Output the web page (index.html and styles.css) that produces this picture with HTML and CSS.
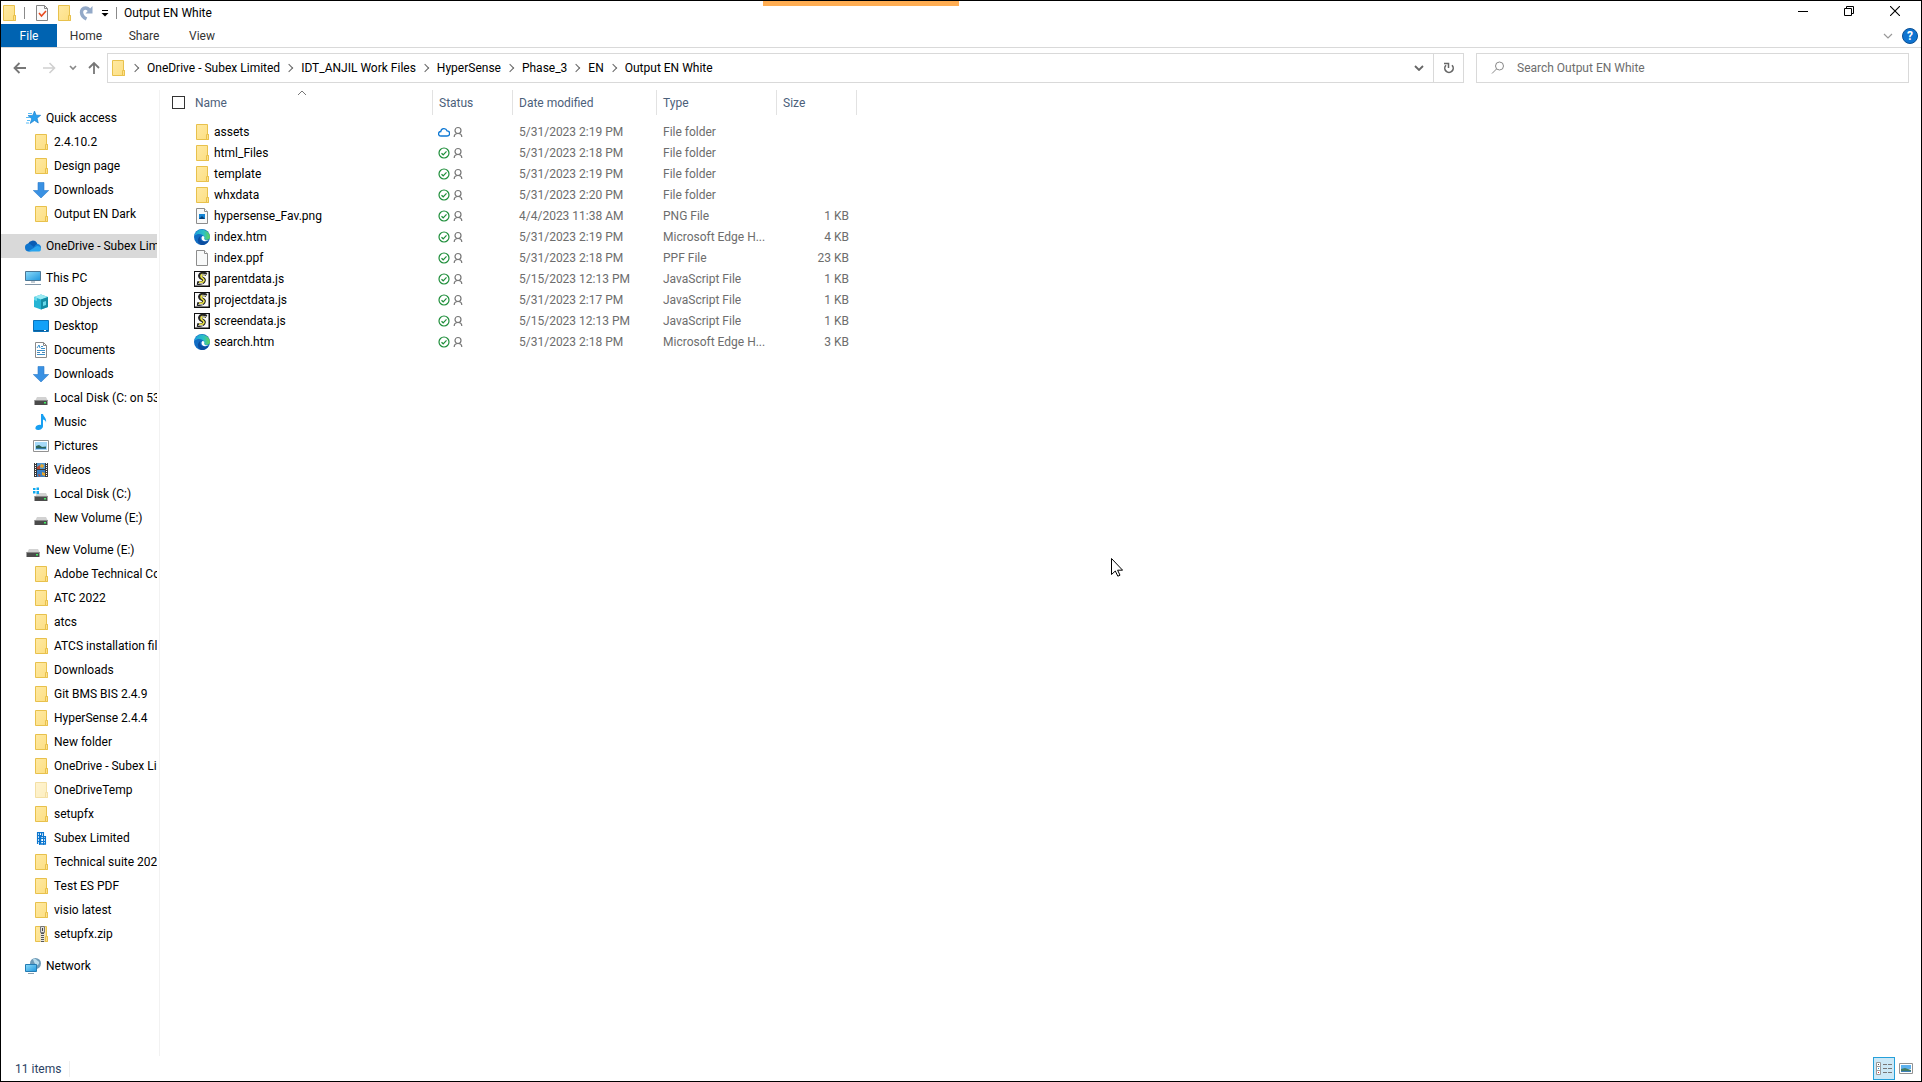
FILE: index.html
```html
<!DOCTYPE html>
<html lang="en">
<head>
<meta charset="utf-8">
<title>Output EN White</title>
<link rel="stylesheet" href="styles.css">
</head>
<body>
<svg class="defs" aria-hidden="true">
  <defs>
    <linearGradient id="gFolder" x1="0" y1="0" x2="1" y2="1"><stop offset="0" stop-color="#ffe9a2"/><stop offset="1" stop-color="#fcdf83"/></linearGradient>
    <linearGradient id="gScreen" x1="0" y1="0" x2="1" y2="1"><stop offset="0" stop-color="#8ddcfb"/><stop offset="1" stop-color="#1f96dd"/></linearGradient>
    <linearGradient id="gEdge" x1="0" y1="0" x2="1" y2="0"><stop offset="0" stop-color="#1c9fdc"/><stop offset=".6" stop-color="#2cc0c4"/><stop offset="1" stop-color="#63d550"/></linearGradient>
  </defs>
  <symbol id="folder" viewBox="0 0 16 16"><path d="M2.500.500h11v10h1v5h-12z" fill="url(#gFolder)" stroke="#e8c14c"/><path d="M12.500 15.500v-5h2v5z" fill="#ffe08a" stroke="#e8c14c"/></symbol>
  <symbol id="zip" viewBox="0 0 16 16"><use href="#folder"/><path d="M9.500 0v16" stroke="#e3e3e3" stroke-width="4"/><path d="M9.500 7v9" stroke="#555" stroke-width="3" stroke-dasharray="1 1"/><path d="M7.500.500h4v6h-4z" fill="#ddd" stroke="#777"/><path d="M9 2h1v3H9z" fill="#444"/></symbol>
  <symbol id="star" viewBox="0 0 16 16"><path d="M9.500 1l1.700 4.200 4.500.100-3.600 2.900 1.200 4.800-3.800-2.500-4.300 3 1.500-4.800L3 5.600l4.700-.2z" fill="#2aa0ee" stroke="#1478c8" stroke-width=".6"/><path d="M3 3.500h4M1 7.500h4M2 10.500h3M1 13h3" stroke="#5bbcf5"/></symbol>
  <symbol id="download" viewBox="0 0 16 16"><path d="M5 .5h6v8h4.700L8 16 .300 8.500H5z" fill="#3991e3" stroke="#2c7bc9" stroke-width=".6"/></symbol>
  <symbol id="onedrive" viewBox="0 0 16 16"><path d="M3 6a5 5 0 0 1 9-1l1 3-9 4z" fill="#0a5cb4"/><path d="M0 9.500A3.500 3.500 0 0 1 5 6l8 6-9 1.500A4 4 0 0 1 0 9.500" fill="#1075cd"/><path d="M11 6.500a3.300 3.300 0 0 1 4.500 4.500L9 9z" fill="#1583d8"/><path d="M3 13.500L12 8c2 0 4 1 4 3s-1 2.500-3 2.500z" fill="#2aa5ee"/></symbol>
  <symbol id="pc" viewBox="0 0 16 16"><path d="M.500 1.500h15v9H.500z" fill="url(#gScreen)" stroke="#4c7795"/><path d="M6 11h4v2H6z" fill="#c4ccd4"/><path d="M0 14.500h16" stroke="#8196a8"/></symbol>
  <symbol id="cube" viewBox="0 0 16 16"><path d="M8 .5l7 2.500v10l-7 2.500L1 13V3z" fill="#25b4d4"/><path d="M8 .5L15 3 8 5.500 1 3z" fill="#9beaf2"/><path d="M8 5.500L15 3v10l-7 2.500z" fill="#128ca5"/><path d="M1 3l3 1v3l-3-1zM10 8l3-1v4l-3 1z" fill="#67d8e9"/></symbol>
  <symbol id="desktop" viewBox="0 0 16 16"><path d="M.500 2.500h15v11H.500z" fill="#12a1f8" stroke="#0a72b9"/><path d="M1 12.500h14" stroke="#0b5d9a"/><path d="M11 12.500h2" stroke="#fff"/></symbol>
  <symbol id="document" viewBox="0 0 16 16"><path d="M2.500.500h8l3 3v12h-11z" fill="#fff" stroke="#8a8a8a"/><path d="M10.500.500v3h3" fill="none" stroke="#8a8a8a"/><path d="M4 6l2-3 1 3M8 4.500h2M8 6.500h4M4 8.500h8M4 12.500h8" fill="none" stroke="#3b90cc"/><path d="M4 10.500h3M9 10.500h3" stroke="#5187ad"/></symbol>
  <symbol id="disk" viewBox="0 0 16 16"><path d="M4 7h9l2 4H2z" fill="#d2d2d2"/><path d="M1.500 10h13v5h-13z" fill="#4b4b4b"/><path d="M2 10.500h12" stroke="#898989"/><path d="M11 12h2v1.500h-2z" fill="#43ef64"/></symbol>
  <symbol id="windisk" viewBox="0 0 16 16"><use href="#disk"/><path d="M0 2h2.500v2H0zM3.500 1.500H6V4H3.500zM0 5h2.500v2.500H0zM3.500 5H6v3H3.500z" fill="#12a9ef"/></symbol>
  <symbol id="music" viewBox="0 0 16 16"><path d="M8 0h2c.500 3 4 4 3 9 0-2-1-3-3-3.500V12c0 2.500-2.500 4-5 4-2 0-3-1-2.500-2.500C3 11.500 5.500 10.500 8 11z" fill="#18a0f2"/></symbol>
  <symbol id="picture" viewBox="0 0 16 16"><path d="M.500 2.500h15v11H.500z" fill="#fff" stroke="#929292"/><path d="M2 4h12v8H2z" fill="#a5d9f8"/><path d="M3 8l3-1 3 2 4-.5V11H3z" fill="#2c6558"/><path d="M3 10h10v1H3z" fill="#3476a6"/></symbol>
  <symbol id="video" viewBox="0 0 16 16"><path d="M1 1h14v14H1z" fill="#3a3a3a"/><path d="M2.500 1v14M13.500 1v14" stroke="#fff" stroke-dasharray="1 1"/><path d="M4 1h8v6H4z" fill="#5396ce"/><path d="M4 8h8v7H4z" fill="#397fc3"/><path d="M8 2l3 1-1 3-3-1zM9 10l3 1v3l-3-1z" fill="#e7a72d"/><path d="M4 5l3-2v4H4zM5 12l3 1-2 2z" fill="#b94a36"/></symbol>
  <symbol id="building" viewBox="0 0 16 16"><path d="M4.600 14V2.600h5.800V6M7.600 14V6.600h4.800V14z" fill="none" stroke="#0b76cf" stroke-width="1.300"/><path d="M6.500 3v12M8.500 3v4M10.500 7v8" stroke="#0b76cf"/><path d="M4 5.500h4M4 8.500h9M4 11.500h9" stroke="#0b76cf"/></symbol>
  <symbol id="network" viewBox="0 0 16 16"><circle cx="10.500" cy="5.500" r="5.500" fill="#6f9bb8"/><path d="M8 1c3-1 3 1 5 2s1 3 0 4-3-1-4-3z" fill="#b9dcec"/><path d="M.500 6.500h11v7H.500z" fill="url(#gScreen)" stroke="#237bb3"/><path d="M3 15.500h6" stroke="#8aa0b0"/></symbol>
  <symbol id="file" viewBox="0 0 16 16"><path d="M2.500.500h8l3 3v12h-11z" fill="#f8f9f9" stroke="#8c8c8c"/><path d="M10.500.500v3h3" fill="#fff" stroke="#8c8c8c"/></symbol>
  <symbol id="png" viewBox="0 0 16 16"><use href="#file"/><path d="M5 6h6v5H5z" fill="#1685d4"/><path d="M5 11l3-3 3 3z" fill="#073d75"/></symbol>
  <symbol id="edge" viewBox="0 0 16 16"><circle cx="8" cy="8" r="8" fill="#116cc3"/><path d="M.300 6.500A8 8 0 0 1 16 8c0 3-4 3.500-6 2.500 0-1 .500-1 .200-2.500C9 4.500 4 4 .300 6.500" fill="url(#gEdge)"/><path d="M6.500 7c-2 5 3 7 8.500 4.500-2 3.500-5 5-8 4.500-4-2-4-7-.5-9" fill="#0b4da0"/><path d="M10 7.500c1 1.500-.5 2 .500 3s3 1 4.500.500C12 13 7 12.500 7.500 8.500 8 7 9 6.500 10 7.500" fill="#fff"/></symbol>
  <symbol id="script" viewBox="0 0 16 16"><path d="M0 0h16v16H0z" fill="#111"/><path d="M1 1h13.500v13.500H1z" fill="#fbfbfb"/><path d="M12.500 3.500C9 1.500 5 3 6 5.500s4.500 1.500 4 4-3 3-7 2.500" fill="none" stroke="#222" stroke-width="3.600"/><path d="M11 4C9 3 6.500 3.500 7 5.500s3.500 2 3 4-3 2-5 1.500" fill="none" stroke="#f0e84c" stroke-width="1.600"/><path d="M8 3.500h4M4 12.500h5" stroke="#aaa"/></symbol>
  <symbol id="synced" viewBox="0 0 12 12"><circle cx="6" cy="6" r="5" fill="none" stroke="#1e8e3a" stroke-width="1.200"/><path d="M3.500 6.200l1.700 1.600 3.300-3.400" fill="none" stroke="#1e8e3a" stroke-width="1.200"/></symbol>
  <symbol id="cloud" viewBox="0 0 12 12"><path d="M2.800 10a2.200 2.200 0 0 1 0-4.500A3.200 3.200 0 0 1 9 4.800a2.600 2.600 0 0 1 0 5.200z" fill="none" stroke="#0f78d4" stroke-width="1.300"/></symbol>
  <symbol id="person" viewBox="0 0 10 12"><circle cx="5" cy="4.500" r="3" fill="none" stroke="#777" stroke-width="1.200"/><path d="M1.200 11c0-2 1.500-3.500 3.800-3.500S8.800 9 8.800 11" fill="none" stroke="#777" stroke-width="1.200"/></symbol>
</svg>

<div class="window">
  <header class="titlebar">
    <svg class="icon"><use href="#folder"/></svg>
    <span class="bar"></span>
    <button class="quick" aria-label="Properties"><svg class="icon" viewBox="0 0 16 16"><path d="M2.500.500h8l3 3v12h-11z" fill="#fafafa" stroke="#858585"/><path d="M10.500.500v3h3" fill="none" stroke="#858585"/><path d="M5 8l2.500 3L12 6" fill="none" stroke="#e8491d" stroke-width="1.600"/></svg></button>
    <button class="quick" aria-label="New folder"><svg class="icon"><use href="#folder"/></svg></button>
    <button class="quick" aria-label="Redo"><svg class="icon" viewBox="0 0 16 16"><path d="M8.500 14C2 11 2 3 7.500 3c2 0 3 1 4 2.500" fill="none" stroke="#93a9c8" stroke-width="3.400"/><path d="M14.500 1v7.500h-7z" fill="#93a9c8"/></svg></button>
    <button class="quick more" aria-label="Customize toolbar"><svg width="8" height="8" viewBox="0 0 8 8"><path d="M1 1.500h6" stroke="#000"/><path d="M.500 4h7L4 7.500z"/></svg></button>
    <span class="bar"></span>
    <h1 class="title">Output EN White</h1>
    <div class="controls">
      <button aria-label="Minimize"><svg width="10" height="10" viewBox="0 0 10 10"><path d="M0 5.500h10" stroke="#000"/></svg></button>
      <button aria-label="Restore"><svg width="10" height="10" viewBox="0 0 10 10"><path d="M.500 2.500h7v7h-7zM2.500 2.500v-2h7v7h-2" fill="none" stroke="#000"/></svg></button>
      <button aria-label="Close"><svg width="10" height="10" viewBox="0 0 10 10"><path d="M0 0l10 10M10 0L0 10" stroke="#000" stroke-width="1.100"/></svg></button>
    </div>
    <div class="share-strip"></div>
  </header>

  <nav class="ribbon" aria-label="Ribbon">
    <button class="tab file">File</button>
    <button class="tab">Home</button>
    <button class="tab">Share</button>
    <button class="tab">View</button>
    <button class="expand" aria-label="Expand ribbon"><svg width="10" height="6" viewBox="0 0 10 6"><path d="M1 1l4 4 4-4" fill="none" stroke="#999" stroke-width="1.200"/></svg></button>
    <button class="help" aria-label="Help">?</button>
  </nav>

  <div class="location">
    <div class="history">
      <button aria-label="Back"><svg width="14" height="12" viewBox="0 0 14 12"><path d="M13 6H2M6.500 1l-5 5 5 5" fill="none" stroke="#777" stroke-width="1.800"/></svg></button>
      <button aria-label="Forward"><svg width="14" height="12" viewBox="0 0 14 12"><path d="M1 6h11M7.500 1l5 5-5 5" fill="none" stroke="#d0d0d0" stroke-width="1.600"/></svg></button>
      <button class="recent" aria-label="Recent locations"><svg width="8" height="6" viewBox="0 0 8 6"><path d="M1 1l3 3 3-3" fill="none" stroke="#888" stroke-width="1.600"/></svg></button>
      <button aria-label="Up"><svg width="12" height="14" viewBox="0 0 12 14"><path d="M6 13V2M1 7l5-5 5 5" fill="none" stroke="#777" stroke-width="1.800"/></svg></button>
    </div>
    <div class="address">
      <svg class="icon"><use href="#folder"/></svg>
      <ol class="crumbs">
        <li><a href="#">OneDrive - Subex Limited</a></li>
        <li><a href="#">IDT_ANJIL Work Files</a></li>
        <li><a href="#">HyperSense</a></li>
        <li><a href="#">Phase_3</a></li>
        <li><a href="#">EN</a></li>
        <li><a href="#">Output EN White</a></li>
      </ol>
      <button class="drop" aria-label="Previous locations"><svg width="10" height="6" viewBox="0 0 10 6"><path d="M1 1l4 4 4-4" fill="none" stroke="#666" stroke-width="1.800"/></svg></button>
      <button class="refresh" aria-label="Refresh"><svg width="12" height="12" viewBox="0 0 12 12"><path d="M9 3.200a4.200 4.200 0 1 1-6 0" fill="none" stroke="#666" stroke-width="1.600"/><path d="M1 1.500h4.500V6" fill="none" stroke="#666" stroke-width="1.500"/></svg></button>
    </div>
    <label class="search">
      <svg width="14" height="14" viewBox="0 0 14 14"><circle cx="8.500" cy="5" r="4" fill="none" stroke="#888"/><path d="M5.500 8L1 12.500" stroke="#888"/></svg>
      <input type="text" placeholder="Search Output EN White" aria-label="Search Output EN White">
    </label>
  </div>

  <div class="body">
    <nav class="tree" aria-label="Folders">
      <ul>
        <li><a class="root" href="#"><svg class="icon"><use href="#star"/></svg>Quick access</a></li>
        <li><a href="#"><svg class="icon"><use href="#folder"/></svg>2.4.10.2</a></li>
        <li><a href="#"><svg class="icon"><use href="#folder"/></svg>Design page</a></li>
        <li><a href="#"><svg class="icon"><use href="#download"/></svg>Downloads</a></li>
        <li><a href="#"><svg class="icon"><use href="#folder"/></svg>Output EN Dark</a></li>
      </ul>
      <ul>
        <li><a class="root selected" href="#"><svg class="icon"><use href="#onedrive"/></svg>OneDrive - Subex Limited</a></li>
      </ul>
      <ul>
        <li><a class="root" href="#"><svg class="icon"><use href="#pc"/></svg>This PC</a></li>
        <li><a href="#"><svg class="icon"><use href="#cube"/></svg>3D Objects</a></li>
        <li><a href="#"><svg class="icon"><use href="#desktop"/></svg>Desktop</a></li>
        <li><a href="#"><svg class="icon"><use href="#document"/></svg>Documents</a></li>
        <li><a href="#"><svg class="icon"><use href="#download"/></svg>Downloads</a></li>
        <li><a href="#"><svg class="icon"><use href="#disk"/></svg>Local Disk (C: on 53</a></li>
        <li><a href="#"><svg class="icon"><use href="#music"/></svg>Music</a></li>
        <li><a href="#"><svg class="icon"><use href="#picture"/></svg>Pictures</a></li>
        <li><a href="#"><svg class="icon"><use href="#video"/></svg>Videos</a></li>
        <li><a href="#"><svg class="icon"><use href="#windisk"/></svg>Local Disk (C:)</a></li>
        <li><a href="#"><svg class="icon"><use href="#disk"/></svg>New Volume (E:)</a></li>
      </ul>
      <ul>
        <li><a class="root" href="#"><svg class="icon"><use href="#disk"/></svg>New Volume (E:)</a></li>
        <li><a href="#"><svg class="icon"><use href="#folder"/></svg>Adobe Technical Co</a></li>
        <li><a href="#"><svg class="icon"><use href="#folder"/></svg>ATC 2022</a></li>
        <li><a href="#"><svg class="icon"><use href="#folder"/></svg>atcs</a></li>
        <li><a href="#"><svg class="icon"><use href="#folder"/></svg>ATCS installation files</a></li>
        <li><a href="#"><svg class="icon"><use href="#folder"/></svg>Downloads</a></li>
        <li><a href="#"><svg class="icon"><use href="#folder"/></svg>Git BMS BIS 2.4.9</a></li>
        <li><a href="#"><svg class="icon"><use href="#folder"/></svg>HyperSense 2.4.4</a></li>
        <li><a href="#"><svg class="icon"><use href="#folder"/></svg>New folder</a></li>
        <li><a href="#"><svg class="icon"><use href="#folder"/></svg>OneDrive - Subex Limited</a></li>
        <li><a href="#"><svg class="icon faded"><use href="#folder"/></svg>OneDriveTemp</a></li>
        <li><a href="#"><svg class="icon"><use href="#folder"/></svg>setupfx</a></li>
        <li><a href="#"><svg class="icon"><use href="#building"/></svg>Subex Limited</a></li>
        <li><a href="#"><svg class="icon"><use href="#folder"/></svg>Technical suite 2022</a></li>
        <li><a href="#"><svg class="icon"><use href="#folder"/></svg>Test ES PDF</a></li>
        <li><a href="#"><svg class="icon"><use href="#folder"/></svg>visio latest</a></li>
        <li><a href="#"><svg class="icon"><use href="#zip"/></svg>setupfx.zip</a></li>
      </ul>
      <ul>
        <li><a class="root" href="#"><svg class="icon"><use href="#network"/></svg>Network</a></li>
      </ul>
    </nav>

    <main class="content">
      <table class="files">
        <colgroup><col class="c-check"><col class="c-name"><col class="c-status"><col class="c-date"><col class="c-type"><col class="c-size"></colgroup>
        <thead>
          <tr>
            <th class="check"><input type="checkbox" aria-label="Select all"></th>
            <th class="name">Name<svg class="sort" width="10" height="6" viewBox="0 0 10 6"><path d="M1 5l4-4 4 4" fill="none" stroke="#777"/></svg></th>
            <th>Status</th><th>Date modified</th><th>Type</th><th>Size</th>
          </tr>
        </thead>
        <tbody>
          <tr><td></td><td class="file-name"><span class="entry"><svg class="icon"><use href="#folder"/></svg>assets</span></td><td class="file-status"><span class="state"><svg class="st"><use href="#cloud"/></svg><svg class="pe"><use href="#person"/></svg></span></td><td>5/31/2023 2:19 PM</td><td>File folder</td><td class="size"></td></tr>
          <tr><td></td><td class="file-name"><span class="entry"><svg class="icon"><use href="#folder"/></svg>html_Files</span></td><td class="file-status"><span class="state"><svg class="st"><use href="#synced"/></svg><svg class="pe"><use href="#person"/></svg></span></td><td>5/31/2023 2:18 PM</td><td>File folder</td><td class="size"></td></tr>
          <tr><td></td><td class="file-name"><span class="entry"><svg class="icon"><use href="#folder"/></svg>template</span></td><td class="file-status"><span class="state"><svg class="st"><use href="#synced"/></svg><svg class="pe"><use href="#person"/></svg></span></td><td>5/31/2023 2:19 PM</td><td>File folder</td><td class="size"></td></tr>
          <tr><td></td><td class="file-name"><span class="entry"><svg class="icon"><use href="#folder"/></svg>whxdata</span></td><td class="file-status"><span class="state"><svg class="st"><use href="#synced"/></svg><svg class="pe"><use href="#person"/></svg></span></td><td>5/31/2023 2:20 PM</td><td>File folder</td><td class="size"></td></tr>
          <tr><td></td><td class="file-name"><span class="entry"><svg class="icon"><use href="#png"/></svg>hypersense_Fav.png</span></td><td class="file-status"><span class="state"><svg class="st"><use href="#synced"/></svg><svg class="pe"><use href="#person"/></svg></span></td><td>4/4/2023 11:38 AM</td><td>PNG File</td><td class="size">1 KB</td></tr>
          <tr><td></td><td class="file-name"><span class="entry"><svg class="icon"><use href="#edge"/></svg>index.htm</span></td><td class="file-status"><span class="state"><svg class="st"><use href="#synced"/></svg><svg class="pe"><use href="#person"/></svg></span></td><td>5/31/2023 2:19 PM</td><td>Microsoft Edge H...</td><td class="size">4 KB</td></tr>
          <tr><td></td><td class="file-name"><span class="entry"><svg class="icon"><use href="#file"/></svg>index.ppf</span></td><td class="file-status"><span class="state"><svg class="st"><use href="#synced"/></svg><svg class="pe"><use href="#person"/></svg></span></td><td>5/31/2023 2:18 PM</td><td>PPF File</td><td class="size">23 KB</td></tr>
          <tr><td></td><td class="file-name"><span class="entry"><svg class="icon"><use href="#script"/></svg>parentdata.js</span></td><td class="file-status"><span class="state"><svg class="st"><use href="#synced"/></svg><svg class="pe"><use href="#person"/></svg></span></td><td>5/15/2023 12:13 PM</td><td>JavaScript File</td><td class="size">1 KB</td></tr>
          <tr><td></td><td class="file-name"><span class="entry"><svg class="icon"><use href="#script"/></svg>projectdata.js</span></td><td class="file-status"><span class="state"><svg class="st"><use href="#synced"/></svg><svg class="pe"><use href="#person"/></svg></span></td><td>5/31/2023 2:17 PM</td><td>JavaScript File</td><td class="size">1 KB</td></tr>
          <tr><td></td><td class="file-name"><span class="entry"><svg class="icon"><use href="#script"/></svg>screendata.js</span></td><td class="file-status"><span class="state"><svg class="st"><use href="#synced"/></svg><svg class="pe"><use href="#person"/></svg></span></td><td>5/15/2023 12:13 PM</td><td>JavaScript File</td><td class="size">1 KB</td></tr>
          <tr><td></td><td class="file-name"><span class="entry"><svg class="icon"><use href="#edge"/></svg>search.htm</span></td><td class="file-status"><span class="state"><svg class="st"><use href="#synced"/></svg><svg class="pe"><use href="#person"/></svg></span></td><td>5/31/2023 2:18 PM</td><td>Microsoft Edge H...</td><td class="size">3 KB</td></tr>
        </tbody>
      </table>
    </main>
  </div>

  <footer class="status">
    <span class="count">11 items</span>
    <div class="views">
      <button class="view active" aria-label="Details view"><svg width="16" height="14" viewBox="0 0 16 14"><path d="M.500.500h4v4h-4zM.500 4.500h4v4h-4zM.500 8.500h4v4h-4z" fill="#fff" stroke="#999"/><path d="M7 2.500h4M12 2.500h4M7 6.500h4M12 6.500h4M7 10.500h4M12 10.500h4" stroke="#777"/><path d="M2 2h1v1H2z" fill="#555"/><path d="M2 6h1v1H2z" fill="#1e90d8"/><path d="M2 10h1v1H2z" fill="#d33"/></svg></button>
      <button class="view" aria-label="Large icons view"><svg width="14" height="11" viewBox="0 0 14 11"><path d="M.500.500h13v10H.500z" fill="#fff" stroke="#929292"/><path d="M2 2h10v4H2z" fill="#5db1ee"/><path d="M2 6l4-1 6 2v2H2z" fill="#447c65"/><path d="M2 8h10v1H2z" fill="#3f81ba"/></svg></button>
    </div>
  </footer>
</div>

<svg class="cursor" width="12" height="19" viewBox="0 0 12 19" aria-hidden="true"><path d="M.500.500v16l3.800-3.500 2.500 5.200 2.200-1-2.400-5h5z" fill="#fff" stroke="#000"/></svg>
</body>
</html>
```
FILE: styles.css
```css
* { box-sizing: border-box; }

body {
  margin: 0;
  background: #fff;
  color: #000;
  font: 12px/16px "Segoe UI", Roboto, "Noto Sans", sans-serif;
}

ul, ol { list-style: none; margin: 0; padding: 0; }
a { color: inherit; text-decoration: none; }
svg { display: block; flex: none; }
button {
  display: flex;
  align-items: center;
  justify-content: center;
  margin: 0;
  padding: 0;
  border: 0;
  background: none;
  color: inherit;
  font: inherit;
}

.defs { position: absolute; width: 0; height: 0; }
.icon { width: 16px; height: 16px; }
.faded { opacity: .5; }

.window {
  display: flex;
  flex-direction: column;
  min-height: 100vh;
  border: 1px solid #000;
}

/* Title bar */
.titlebar {
  position: relative;
  display: flex;
  align-items: center;
  height: 23px;
}
.bar { width: 1px; height: 12px; margin: 0 6px 0 7px; background: #8a8a8a; }
.quick { width: 22px; height: 22px; }
.quick.more { width: 16px; }
.quick.more + .bar { margin: 0 7px 0 3px; }
.title { margin: 0; font-size: 12px; font-weight: 400; }
.controls { display: flex; margin: 0 3px 0 auto; align-self: flex-start; }
.controls button { width: 46px; height: 20px; }
.share-strip {
  position: absolute;
  top: 0;
  left: 762px;
  width: 196px;
  height: 5px;
  background: #ffad52;
}

/* Ribbon tabs */
.ribbon {
  display: flex;
  align-items: stretch;
  height: 24px;
  border-bottom: 1px solid #d9d9d9;
  color: #333;
}
.tab { width: 58px; }
.tab.file { width: 56px; background: #0063b1; color: #fff; }
.expand { width: 24px; margin-left: auto; }
.help {
  align-self: center;
  width: 16px;
  height: 16px;
  margin: 0 3px 0 2px;
  border: 1px solid #0a4f94;
  border-radius: 50%;
  background: #0f74d1;
  color: #fff;
  font-weight: 700;
  line-height: 14px;
}

/* Address row */
.location {
  display: flex;
  align-items: center;
  height: 42px;
  padding: 0 12px 2px;
}
.history { display: flex; align-items: center; width: 94px; gap: 15px; }
.recent { margin: 0 -4px 0 -2px; }
.address, .search {
  display: flex;
  align-items: center;
  height: 30px;
  border: 1px solid #d9d9d9;
}
.address { flex: 1; padding-left: 2px; }
.crumbs { display: flex; }
.crumbs li { display: flex; align-items: center; }
.crumbs li::before {
  content: "";
  width: 5px;
  height: 5px;
  margin: 0 9px 0 6px;
  border: solid #666;
  border-width: 1px 1px 0 0;
  rotate: 45deg;
}
.drop { width: 28px; margin-left: auto; }
.refresh { width: 30px; height: 28px; border-left: 1px solid #d9d9d9; }
.search { width: 433px; margin-left: 12px; padding-left: 14px; gap: 12px; }
.search input {
  flex: 1;
  min-width: 0;
  padding: 0;
  border: 0;
  outline: 0;
  background: none;
  font: inherit;
}
.search input::placeholder { color: #6d6d6d; opacity: 1; }

/* Navigation tree */
.body { display: flex; flex: 1; }
.tree {
  display: flex;
  flex-direction: column;
  gap: 8px;
  width: 159px;
  padding: 16px 2px 0 0;
  border-right: 1px solid #f2f2f2;
}
.tree a {
  display: flex;
  align-items: center;
  gap: 5px;
  height: 24px;
  padding-left: 32px;
  overflow: hidden;
  white-space: nowrap;
}
.tree .root { padding-left: 24px; }
.tree .selected { background: #d9d9d9; }

/* File list */
.content { flex: 1; min-width: 0; padding-left: 2px; }
.files { table-layout: fixed; width: 695px; border-spacing: 0; }
.c-check { width: 25px; }
.c-name { width: 246px; }
.c-status { width: 80px; }
.c-date { width: 144px; }
.c-type { width: 120px; }
.c-size { width: 80px; }
.files th {
  height: 25px;
  padding: 0 6px;
  border-right: 1px solid #e2e2e2;
  color: #4c607a;
  font-weight: 400;
  text-align: left;
}
.files th.check { padding: 0 0 0 10px; border: 0; }
.files th.name { position: relative; padding-left: 8px; }
.check input {
  display: block;
  width: 13px;
  height: 13px;
  margin: 0;
  border: 1px solid #333;
  background: #fff;
  appearance: none;
}
.sort { position: absolute; top: 0; left: 45%; }
.files tbody::before { content: ""; display: block; height: 6px; }
.files td {
  height: 21px;
  padding: 0 6px;
  color: #6d6d6d;
  white-space: nowrap;
}
.files .file-name { padding-left: 7px; }
.files .file-status { padding-left: 5px; }
.files .size { padding-right: 8px; text-align: right; }
.entry { display: flex; align-items: center; gap: 4px; color: #000; }
.state { display: flex; align-items: center; gap: 3px; }
.st { width: 12px; height: 12px; }
.pe { width: 10px; height: 12px; }

/* Status bar */
.status {
  display: flex;
  align-items: center;
  justify-content: space-between;
  height: 25px;
  padding: 0 4px 0 14px;
  color: #2b3f63;
}
.count { padding-right: 8px; border-right: 1px solid #eee; }
.views { display: flex; }
.view { width: 22px; height: 23px; }
.view.active { border: 1px solid #26a0da; background: #cce8f6; }

.cursor { position: absolute; top: 558px; left: 1111px; }
```
